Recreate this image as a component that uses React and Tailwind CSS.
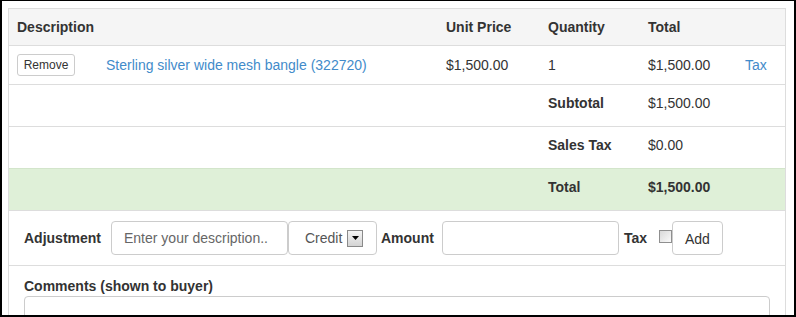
const COLS = "grid grid-cols-[89px_340px_102px_100px_97px_48px]";

function Cell({ children, className = "" }) {
  return <div className={`px-[8px] ${className}`}>{children}</div>;
}

function TotalsRow({ label, value, className = "", bold = false }) {
  return (
    <div className={`${COLS} h-[42px] pt-[8px] border-b ${className}`}>
      <Cell className="col-span-3" />
      <Cell className="font-bold">{label}</Cell>
      <Cell className={bold ? "font-bold" : ""}>{value}</Cell>
      <Cell />
    </div>
  );
}

function SelectArrow() {
  return (
    <span className="ml-[5px] flex h-[17px] w-[16px] items-center justify-center border border-[#8a8a8a] bg-gradient-to-b from-[#f4f4f4] to-[#d4d4d4]">
      <svg width="7" height="4" viewBox="0 0 7 4">
        <path d="M0 0h7L3.5 4z" fill="#000" />
      </svg>
    </span>
  );
}

export default function App() {
  return (
    <div className="w-[796px] h-[317px] overflow-hidden bg-white border-black border-t border-l-2 border-r-2 border-b-2 pl-[6px] pr-[8px] pt-[7px] font-['Liberation_Sans',Arial,sans-serif] text-[14px] leading-[20px] text-[#333]">
      <div className="h-full border-l border-r border-[#ddd]">
        <div className="border-t border-[#ddd]">
          {/* header */}
          <div className={`${COLS} h-[37px] items-center bg-[#f5f5f5] border-b border-[#ddd] font-bold`}>
            <Cell className="col-span-2">Description</Cell>
            <Cell>Unit Price</Cell>
            <Cell>Quantity</Cell>
            <Cell>Total</Cell>
            <Cell />
          </div>

          {/* line item */}
          <div className={`${COLS} h-[39px] items-center border-b border-[#ddd]`}>
            <Cell>
              <button className="h-[22px] w-[58px] rounded-[3px] border border-[#ccc] bg-white text-[12px] leading-[20px] text-[#333]">
                Remove
              </button>
            </Cell>
            <Cell className="text-[#428bca] whitespace-nowrap">Sterling silver wide mesh bangle (322720)</Cell>
            <Cell>$1,500.00</Cell>
            <Cell>1</Cell>
            <Cell>$1,500.00</Cell>
            <Cell className="text-[#428bca]">Tax</Cell>
          </div>

          <TotalsRow label="Subtotal" value="$1,500.00" className="border-[#ddd]" />
          <TotalsRow label="Sales Tax" value="$0.00" className="border-[#d3e5cb]" />
          <TotalsRow label="Total" value="$1,500.00" bold className="bg-[#dff0d8] border-[#ddd]" />

          {/* adjustment form */}
          <div className="flex h-[55px] items-center border-b border-[#ddd] px-[15px]">
            <span className="w-[87px] font-bold">Adjustment</span>
            <div className="flex h-[34px] w-[177px] items-center rounded-[4px] border border-[#ccc] px-[12px] text-[#666]">
              Enter your description..
            </div>
            <div className="flex h-[34px] w-[89px] items-center rounded-[4px] border border-[#ccc] pl-[16px] text-[#555]">
              Credit
              <SelectArrow />
            </div>
            <span className="ml-[4px] w-[61px] font-bold">Amount</span>
            <div className="h-[34px] w-[177px] rounded-[4px] border border-[#ccc]" />
            <span className="ml-[5px] w-[35px] font-bold">Tax</span>
            <span className="-mt-[3px] h-[13px] w-[13px] border border-[#8f8f8f] bg-gradient-to-br from-[#d9d9d9] to-[#fafafa]" />
            <button className="flex h-[34px] w-[51px] items-center rounded-[4px] border border-[#ccc] bg-white pl-[12px] pt-[2px] text-[14px] text-[#333]">
              Add
            </button>
          </div>

          {/* comments */}
          <div className="px-[15px] pt-[10px]">
            <div className="font-bold">Comments (shown to buyer)</div>
            <div className="h-[60px] rounded-[4px] border border-[#ccc]" />
          </div>
        </div>
      </div>
    </div>
  );
}
